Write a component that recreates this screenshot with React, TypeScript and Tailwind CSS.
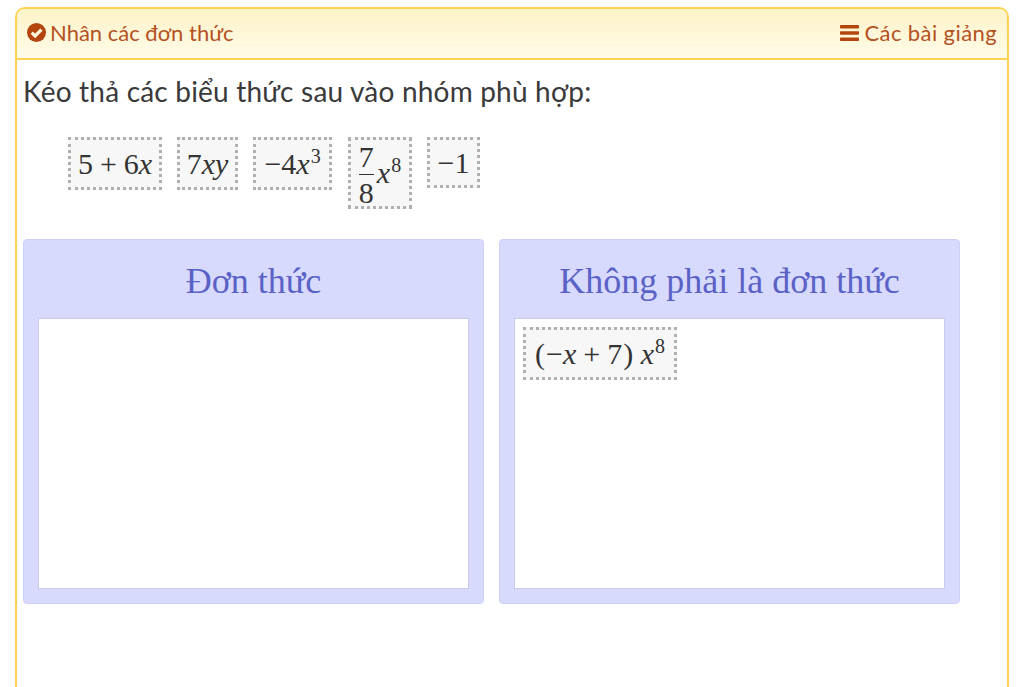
import React from "react";

const Chip = ({ w, h, children }: { w: string; h: string; children: React.ReactNode }) => (
  <div className={`${w} ${h} flex items-center justify-center border-[3px] border-dotted border-[#b0b0b0] bg-[#f7f7f7] text-[30px] leading-none text-[#333] [font-family:'Liberation_Serif',serif] whitespace-nowrap`}>
    {children}
  </div>
);

const I = ({ children }: { children: React.ReactNode }) => <i className="italic">{children}</i>;
const Op = ({ children }: { children: React.ReactNode }) => <span className="mx-[7px]">{children}</span>;
const Sup = ({ children }: { children: React.ReactNode }) => (
  <sup className="text-[20px] leading-none relative -top-[8px] ml-[1px] align-baseline">{children}</sup>
);

const CheckIcon = () => (
  <svg viewBox="0 0 20 20" className="w-[19px] h-[19px] shrink-0">
    <circle cx="10" cy="10" r="10" fill="#b4450f" />
    <path d="M5 10.2l3.5 3.5L15.2 7" fill="none" stroke="#fff8dc" strokeWidth="3.4" />
  </svg>
);

const BarsIcon = () => (
  <svg viewBox="0 0 19 16" className="w-[19px] h-[16px] shrink-0" fill="#b4450f">
    <rect x="0" y="0" width="19" height="3.6" rx="0.8" />
    <rect x="0" y="6.2" width="19" height="3.6" rx="0.8" />
    <rect x="0" y="12.4" width="19" height="3.6" rx="0.8" />
  </svg>
);

const Panel = ({ title, children }: { title: string; children?: React.ReactNode }) => (
  <div className="w-[461px] h-[365px] flex flex-col bg-[#d7d9fd] border border-[#cdd0f8] rounded-[4px] px-[14px] pb-[14px]">
    <div className="h-[78px] pt-[4px] flex items-center justify-center text-[36px] text-[#5a62c6] [font-family:'Liberation_Serif',serif]">
      {title}
    </div>
    <div className="flex-1 bg-white border border-[#c9cbe8] p-2">{children}</div>
  </div>
);

export default function App() {
  return (
    <div className="h-[687px] overflow-hidden bg-white pt-[7px] pl-[15px] [font-family:'Lato','Noto_Sans',sans-serif]">
      <div className="w-[994px] h-[700px] border-2 border-[#fbd34f] rounded-t-[10px] overflow-hidden">
        <div className="h-[51px] pb-[2px] flex items-center justify-between pl-[10px] pr-[10px] border-b-2 border-[#fbd34f] bg-gradient-to-b from-[#fdf3c8] to-[#fffbe8] text-[22px] text-[#b4521f]">
          <div className="flex items-center gap-[4px]">
            <CheckIcon />
            <span>Nhân các đơn thức</span>
          </div>
          <div className="flex items-center gap-[5px]">
            <BarsIcon />
            <span className="tracking-[0.4px]">Các bài giảng</span>
          </div>
        </div>
        <div className="px-[6px]">
          <p className="mt-[11px] h-[40px] text-[28px] leading-[40px] tracking-[0.2px] text-[#3a3a3a] whitespace-nowrap">
            Kéo thả các biểu thức sau vào nhóm phù hợp:
          </p>
          <div className="mt-[26px] pl-[45px] flex items-start">
            <Chip w="w-[94px]" h="h-[53px]">5<Op>+</Op>6<I>x</I></Chip>
            <div className="ml-[15px]"><Chip w="w-[61px]" h="h-[53px]">7<I>xy</I></Chip></div>
            <div className="ml-[15px]"><Chip w="w-[79px]" h="h-[53px]">−4<I>x</I><Sup>3</Sup></Chip></div>
            <div className="ml-[16px]"><Chip w="w-[64px]" h="h-[72px]">
              <span className="inline-flex flex-col items-center mr-[3px] mt-[3px] leading-[36px]">
                <span>7</span>
                <span className="w-[15px] h-px bg-[#333] -mt-[1px]" />
                <span>8</span>
              </span>
              <I>x</I>
              <Sup>8</Sup>
            </Chip></div>
            <div className="ml-[15px]"><Chip w="w-[53px]" h="h-[51px]">−1</Chip></div>
          </div>
          <div className="mt-[30px] flex gap-[15px]">
            <Panel title="Đơn thức" />
            <Panel title="Không phải là đơn thức">
              <Chip w="w-[154px]" h="h-[53px]">
                <span className="mr-[1px]">(</span>−<I>x</I><Op>+</Op>7<span className="ml-[1px]">)</span>&nbsp;<I>x</I><Sup>8</Sup>
              </Chip>
            </Panel>
          </div>
        </div>
      </div>
    </div>
  );
}
